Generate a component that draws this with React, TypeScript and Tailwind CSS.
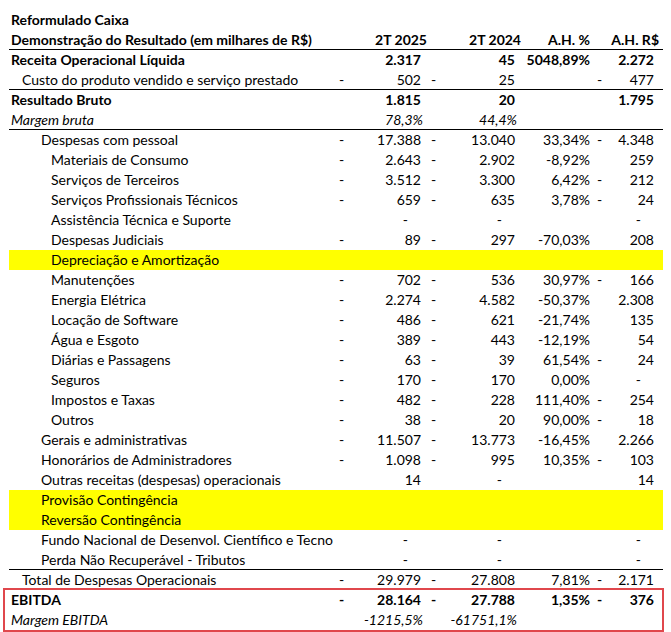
import React from "react";

type Row = {
  label: string;
  indent: number;
  bold?: boolean;
  italic?: boolean;
  yellow?: boolean;
  line?: boolean;
  c1?: string;
  c2?: string;
  pct?: string;
  r?: string;
};

// "-502" = negativo contábil (traço à esquerda), "0" = traço de zero
const rows: Row[] = [
  { label: "Receita Operacional Líquida", indent: 0, bold: true, c1: "2.317", c2: "45", pct: "5048,89%", r: "2.272" },
  { label: "Custo do produto vendido e serviço prestado", indent: 1, line: true, c1: "-502", c2: "-25", r: "-477" },
  { label: "Resultado Bruto", indent: 0, bold: true, c1: "1.815", c2: "20", r: "1.795" },
  { label: "Margem bruta", indent: 0, italic: true, line: true, c1: "78,3%", c2: "44,4%" },
  { label: "Despesas com pessoal", indent: 2, c1: "-17.388", c2: "-13.040", pct: "33,34%", r: "-4.348" },
  { label: "Materiais de Consumo", indent: 3, c1: "-2.643", c2: "-2.902", pct: "-8,92%", r: "259" },
  { label: "Serviços de Terceiros", indent: 3, c1: "-3.512", c2: "-3.300", pct: "6,42%", r: "-212" },
  { label: "Serviços Profissionais Técnicos", indent: 3, c1: "-659", c2: "-635", pct: "3,78%", r: "-24" },
  { label: "Assistência Técnica e Suporte", indent: 3, c1: "0", c2: "0", r: "0" },
  { label: "Despesas Judiciais", indent: 3, c1: "-89", c2: "-297", pct: "-70,03%", r: "208" },
  { label: "Depreciação e Amortização", indent: 3, yellow: true },
  { label: "Manutenções", indent: 3, c1: "-702", c2: "-536", pct: "30,97%", r: "-166" },
  { label: "Energia Elétrica", indent: 3, c1: "-2.274", c2: "-4.582", pct: "-50,37%", r: "2.308" },
  { label: "Locação de Software", indent: 3, c1: "-486", c2: "-621", pct: "-21,74%", r: "135" },
  { label: "Água e Esgoto", indent: 3, c1: "-389", c2: "-443", pct: "-12,19%", r: "54" },
  { label: "Diárias e Passagens", indent: 3, c1: "-63", c2: "-39", pct: "61,54%", r: "-24" },
  { label: "Seguros", indent: 3, c1: "-170", c2: "-170", pct: "0,00%", r: "0" },
  { label: "Impostos e Taxas", indent: 3, c1: "-482", c2: "-228", pct: "111,40%", r: "-254" },
  { label: "Outros", indent: 3, c1: "-38", c2: "-20", pct: "90,00%", r: "-18" },
  { label: "Gerais e administrativas", indent: 2, c1: "-11.507", c2: "-13.773", pct: "-16,45%", r: "2.266" },
  { label: "Honorários de Administradores", indent: 2, c1: "-1.098", c2: "-995", pct: "10,35%", r: "-103" },
  { label: "Outras receitas (despesas) operacionais", indent: 2, c1: "14", c2: "0", r: "14" },
  { label: "Provisão Contingência", indent: 2, yellow: true },
  { label: "Reversão Contingência", indent: 2, yellow: true },
  { label: "Fundo Nacional de Desenvol. Científico e Tecno", indent: 2, c1: "0", c2: "0", r: "0" },
  { label: "Perda Não Recuperável - Tributos", indent: 2, line: true, c1: "0", c2: "0", r: "0" },
  { label: "Total de Despesas Operacionais", indent: 1, c1: "-29.979", c2: "-27.808", pct: "7,81%", r: "-2.171" },
];

const ebitda: Row[] = [
  { label: "EBITDA", indent: 0, bold: true, c1: "-28.164", c2: "-27.788", pct: "1,35%", r: "-376" },
  { label: "Margem EBITDA", indent: 0, italic: true, c1: "-1215,5%", c2: "-61751,1%" },
];

const indents = ["pl-[2px]", "pl-[13px]", "pl-[32px]", "pl-[42px]"];

function Num({ v, dashPad, w }: { v?: string; dashPad: string; w: string }) {
  if (!v) return <div className={`${w} shrink-0`} />;
  if (v === "0") {
    return <div className={`${w} shrink-0 text-right pr-[22px]`}>-</div>;
  }
  if (v.endsWith("%")) {
    return <div className={`${w} shrink-0 text-right pr-[7px]`}>{v}</div>;
  }
  const neg = v.startsWith("-");
  return (
    <div className={`${w} shrink-0 flex justify-between pr-[9px] ${dashPad}`}>
      <span>{neg ? "-" : ""}</span>
      <span>{neg ? v.slice(1) : v}</span>
    </div>
  );
}

function Line({ row }: { row: Row }) {
  return (
    <div
      className={`flex h-[20px] leading-[20px] ${row.bold ? "font-bold" : ""} ${row.italic ? "italic" : ""} ${
        row.yellow ? "bg-[#ffff00]" : ""
      } ${row.line ? "border-b border-black" : ""}`}
    >
      <div className={`w-[326px] shrink-0 whitespace-nowrap ${indents[row.indent]}`}>{row.label}</div>
      <Num v={row.c1} dashPad="pl-[4px]" w="w-[95px]" />
      <Num v={row.c2} dashPad="pl-[1px]" w="w-[94px]" />
      <div className="w-[69px] shrink-0 text-right pr-[3px]">{row.pct}</div>
      <Num v={row.r} dashPad="pl-[4px]" w="w-[70px]" />
    </div>
  );
}

export default function App() {
  return (
    <div className="w-[671px] h-[632px] bg-white overflow-hidden text-black text-[14px] font-['Lato',sans-serif]">
      <div className="pt-[10px] pl-[9px] w-[663px]">
        <div className="h-[20px] leading-[20px] pl-[2px] font-bold">Reformulado Caixa</div>
        <div className="flex h-[20px] leading-[20px] font-bold border-b border-black">
          <div className="w-[326px] shrink-0 pl-[2px] whitespace-nowrap">Demonstração do Resultado (em milhares de R$)</div>
          <div className="w-[95px] shrink-0 text-right pr-[3px]">2T 2025</div>
          <div className="w-[94px] shrink-0 text-right pr-[3px]">2T 2024</div>
          <div className="w-[69px] shrink-0 text-right pr-[3px]">A.H. %</div>
          <div className="w-[70px] shrink-0 text-right pr-[4px]">A.H. R$</div>
        </div>
        {rows.map((row, i) => (
          <Line key={i} row={row} />
        ))}
        <div className="-ml-[6px] -mt-[2px] w-[661px] h-[44px] border-2 border-[#e0474c] pl-[4px]">
          {ebitda.map((row, i) => (
            <Line key={i} row={row} />
          ))}
        </div>
      </div>
    </div>
  );
}
